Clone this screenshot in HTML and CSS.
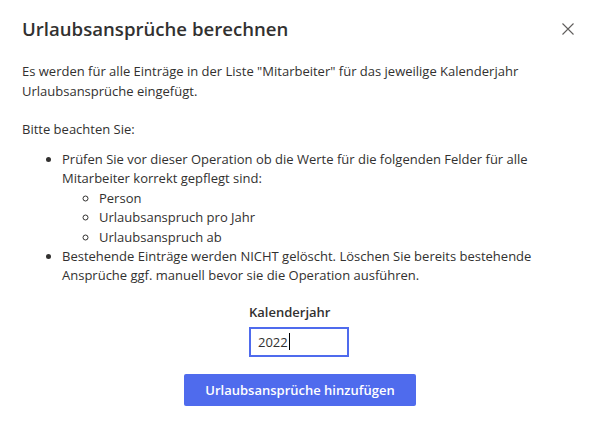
FILE: index.html
```html
<!DOCTYPE html>
<html lang="de">
<head>
<meta charset="utf-8">
<title>Urlaubsansprüche berechnen</title>
<link rel="stylesheet" href="styles.css">
</head>
<body>
<div class="dialog">
  <div class="header">
    <h1 class="title">Urlaubsansprüche berechnen</h1>
    <button class="close" aria-label="Schließen">
      <svg width="12" height="12" viewBox="0 0 12 12"><path d="M0.5 0.5 L11.5 11.5 M11.5 0.5 L0.5 11.5" stroke="#605e5c" stroke-width="1.1" fill="none"/></svg>
    </button>
  </div>
  <div class="content">
    <p class="para">Es werden für alle Einträge in der Liste "Mitarbeiter" für das jeweilige Kalenderjahr Urlaubsansprüche eingefügt.</p>
    <p class="para">Bitte beachten Sie:</p>
    <ul class="list">
      <li>Prüfen Sie vor dieser Operation ob die Werte für die folgenden Felder für alle Mitarbeiter korrekt gepflegt sind:
        <ul class="sublist">
          <li>Person</li>
          <li>Urlaubsanspruch pro Jahr</li>
          <li>Urlaubsanspruch ab</li>
        </ul>
      </li>
      <li>Bestehende Einträge werden NICHT gelöscht. Löschen Sie bereits bestehende Ansprüche ggf. manuell bevor sie die Operation ausführen.</li>
    </ul>
    <div class="form">
      <div class="field">
        <label class="label" for="jahr">Kalenderjahr</label>
        <div class="input"><span class="value">2022</span><span class="caret"></span></div>
      </div>
      <button class="primary">Urlaubsansprüche hinzufügen</button>
    </div>
  </div>
</div>
</body>
</html>
```
FILE: styles.css
```css
html, body {
  margin: 0;
  padding: 0;
  background: #ffffff;
}
body {
  font-family: "Segoe UI", "Open Sans", "Noto Sans", sans-serif;
  color: #323130;
  font-size: 14px;
}
.dialog {
  width: 597px;
  height: 429px;
  box-sizing: border-box;
  padding: 0 0 0 22px;
}
.header {
  display: flex;
  justify-content: space-between;
  align-items: flex-start;
  padding-top: 15px;
}
.title {
  margin: 0;
  font-size: 18.6px;
  font-weight: 600;
  line-height: 28px;
  color: #323130;
}
.close {
  border: none;
  background: none;
  padding: 0;
  width: 32px;
  height: 32px;
  margin: -2px 13px 0 0;
  display: flex;
  align-items: center;
  justify-content: center;
}
.content {
  padding-right: 21px;
  font-size: 13px;
}
.para {
  margin: 0;
  line-height: 20px;
}
.para:first-child {
  margin-top: 16px;
}
.para + .para {
  margin-top: 18px;
}
.list {
  margin: 11px 0 0 0;
  padding-left: 40px;
  line-height: 19.4px;
  list-style: disc;
}
.sublist {
  margin: 0;
  padding-left: 37px;
  list-style: circle;
}
.form {
  display: flex;
  flex-direction: column;
  align-items: center;
  margin-top: 16px;
}
.field {
  display: flex;
  flex-direction: column;
}
.label {
  font-weight: 600;
  line-height: 20px;
  margin-bottom: 5px;
}
.input {
  width: 100px;
  height: 30px;
  box-sizing: border-box;
  border: 2px solid #4f6bed;
  display: flex;
  align-items: center;
  padding-left: 7px;
}
.caret {
  display: inline-block;
  width: 1px;
  height: 17px;
  background: #000;
  margin-left: 1px;
}
.primary {
  margin: 17px 0 0 2px;
  width: 232px;
  height: 32px;
  border: none;
  border-radius: 2px;
  background: #4f6bed;
  color: #fff;
  font-family: inherit;
  font-size: 13px;
  font-weight: 600;
}
```
